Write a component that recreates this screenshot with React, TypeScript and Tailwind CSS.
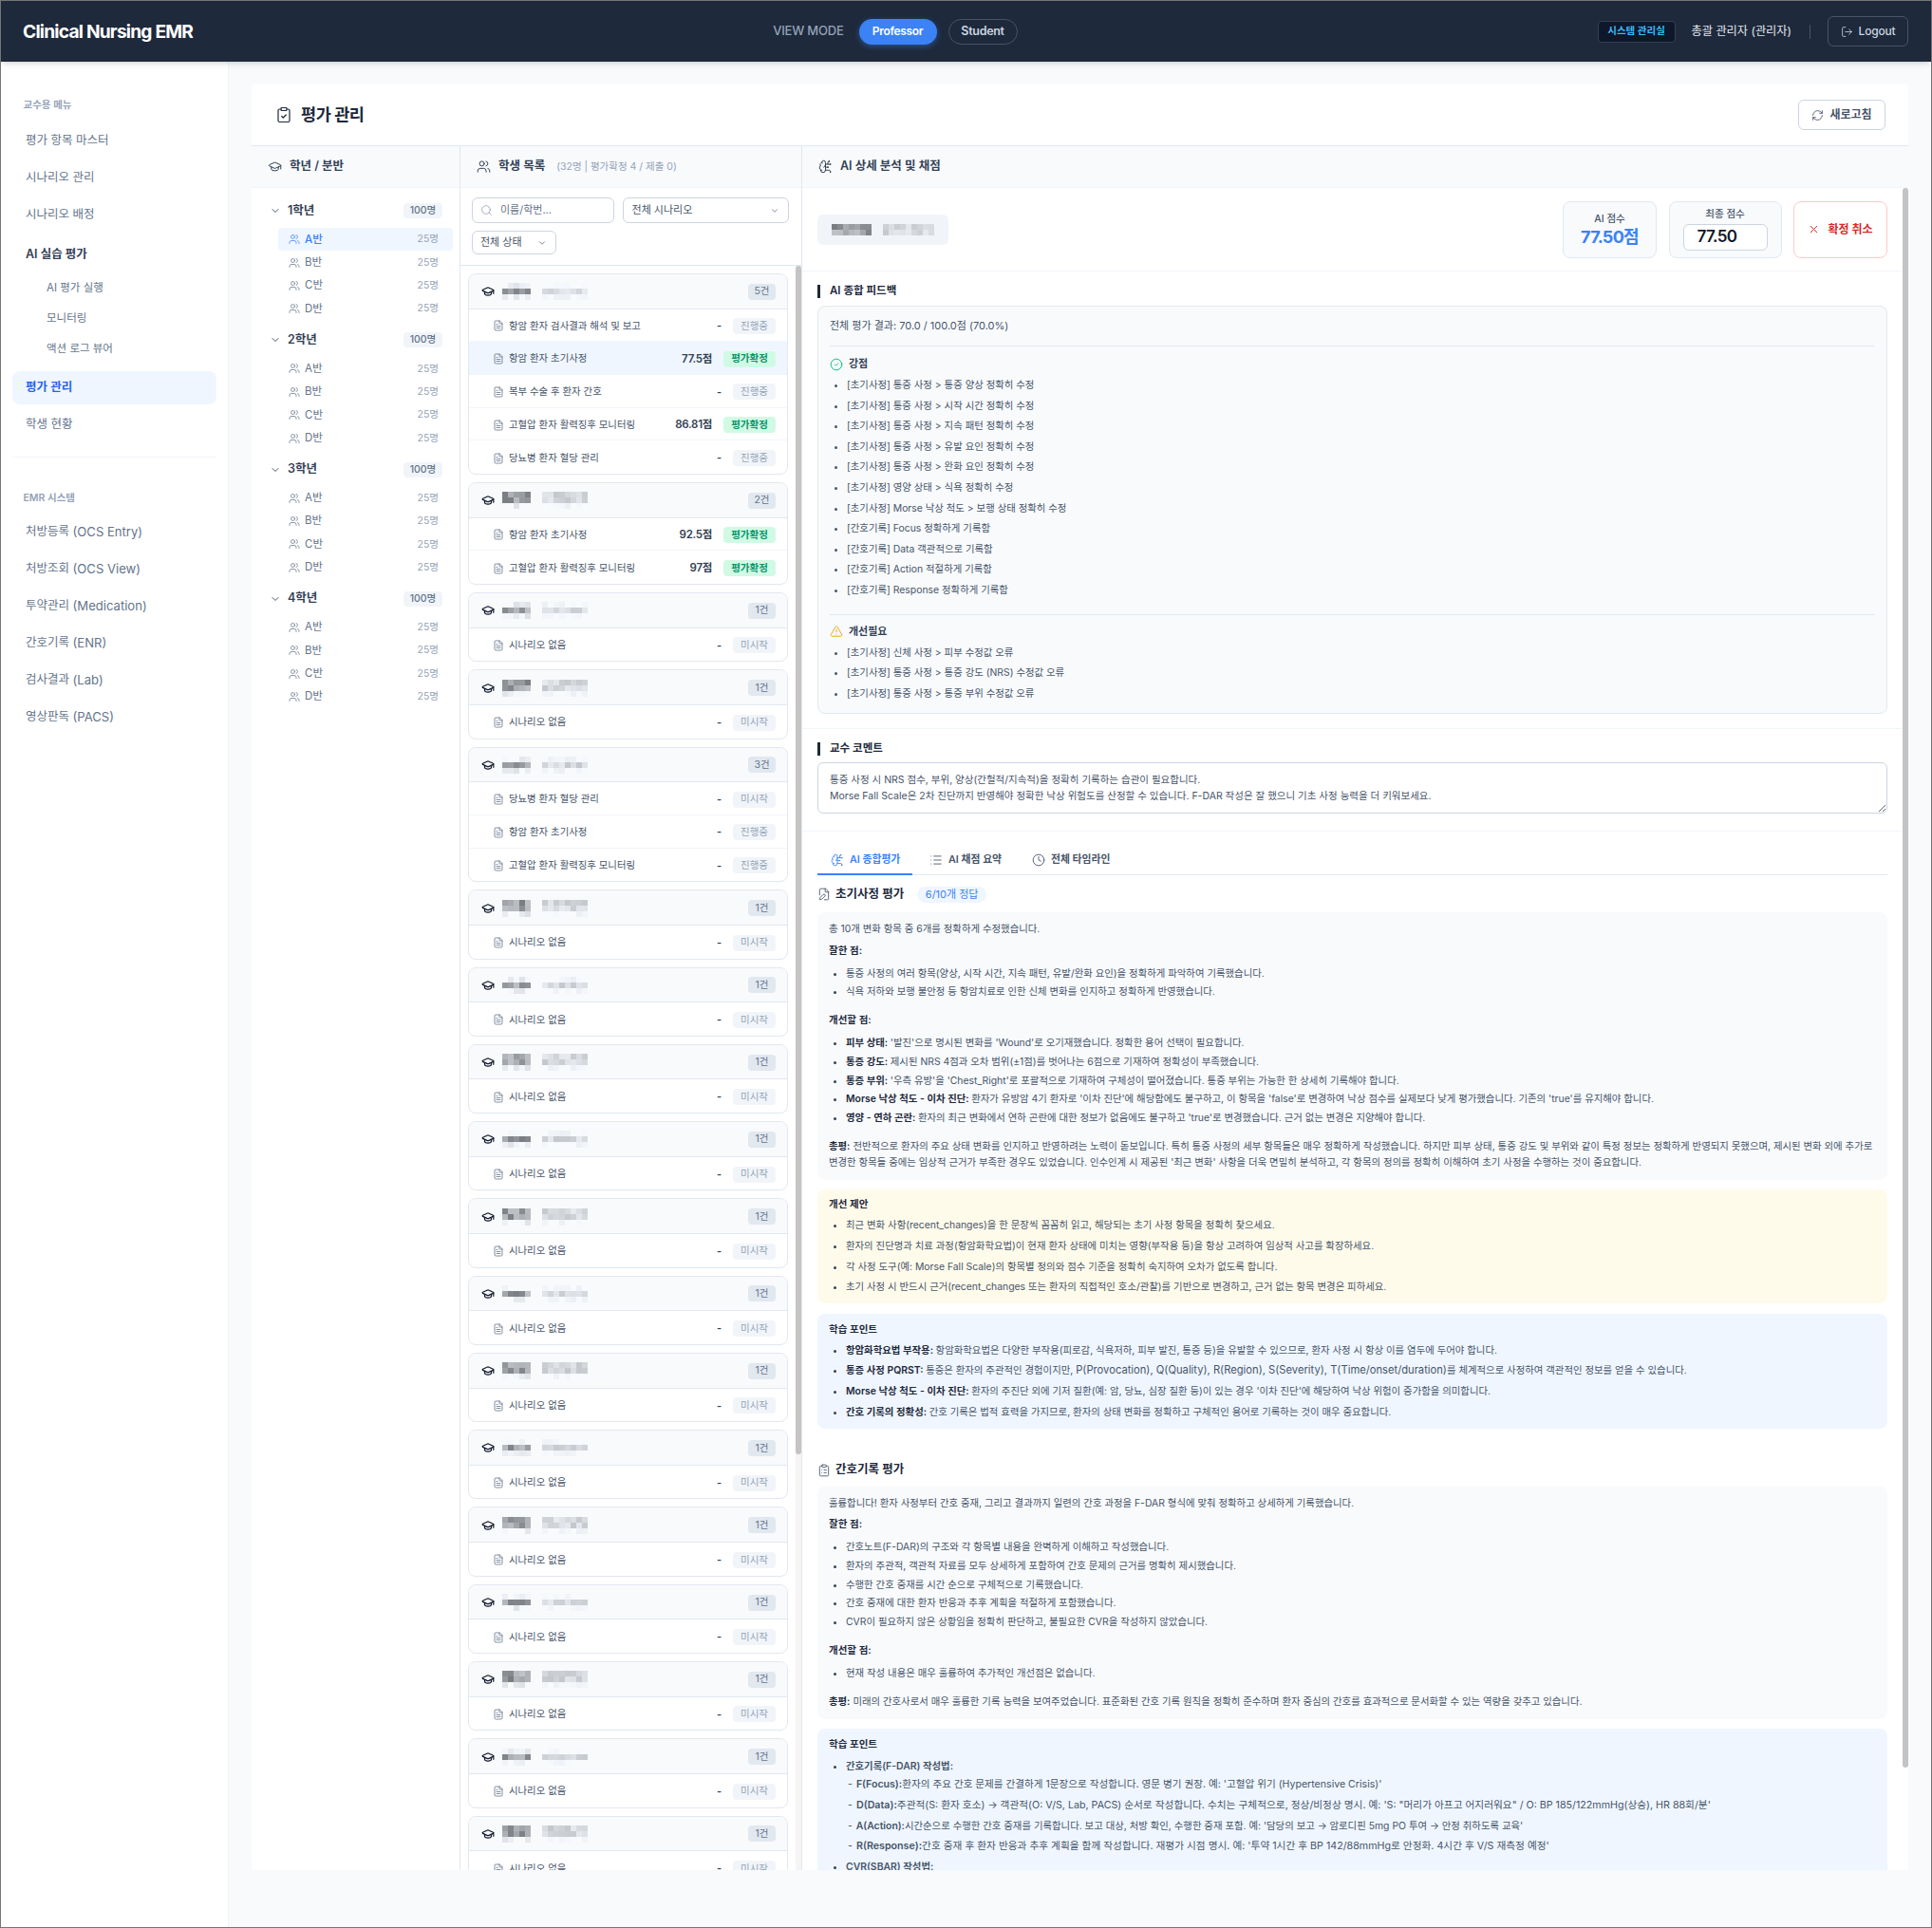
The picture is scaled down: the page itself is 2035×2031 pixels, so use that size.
import React from "react";
import {
  BrainCircuit, ChevronDown, CircleCheck, ClipboardCheck, ClipboardList, Clock, FilePen, FileText,
  GraduationCap, List, LogOut, RefreshCw, Search, TriangleAlert, Users, X,
} from "lucide-react";

function Mosaic({ seed, cols = 15, rows = 3, dark = 5, gap = 2, size = 6 }: { seed: number; cols?: number; rows?: number; dark?: number; gap?: number; size?: number }) {
  let s = seed * 7919 + 13;
  const rnd = () => {
    s = (s * 16807 + 11) % 2147483647;
    return (s % 1000) / 1000;
  };
  const cells: React.ReactNode[] = [];
  const upper = seed % 2 === 0;
  for (let r = 0; r < rows; r++) {
    for (let c = 0; c < cols; c++) {
      if (c >= dark && c < dark + gap) continue;
      const isDark = c < dark;
      const main = rows === 2 || r === 1 || (upper && r === 0);
      let g: number;
      if (isDark) g = main ? 125 + rnd() * 70 : 225 + rnd() * 25;
      else g = main ? 200 + rnd() * 35 : 240 + rnd() * 12;
      if (!main && rnd() < 0.35) continue;
      const v = Math.round(g);
      cells.push(<rect key={r + "-" + c} x={c * size} y={r * size} width={size} height={size} fill={`rgb(${v - 4},${v - 1},${v + 4})`} />);
    }
  }
  return (
    <svg width={cols * size} height={rows * size} className="block shrink-0" shapeRendering="crispEdges">
      {cells}
    </svg>
  );
}

const professorMenu = ["평가 항목 마스터", "시나리오 관리", "시나리오 배정"];
const emrMenu: [string, string][] = [["처방등록", "(OCS Entry)"], ["처방조회", "(OCS View)"], ["투약관리", "(Medication)"], ["간호기록", "(ENR)"], ["검사결과", "(Lab)"], ["영상판독", "(PACS)"]];

function Sidebar() {
  return (
    <aside className="w-[240px] shrink-0 bg-white border-r border-[#f1f5f9] px-3 pt-[38px] flex flex-col">
      <div className="pl-[11.5px] h-[15px] leading-[15px] text-[10.5px] font-semibold text-[#94a3b8] mb-[12.5px]">교수용 메뉴</div>
      <div className="flex flex-col gap-1">
        {professorMenu.map((m) => (
          <div key={m} className="h-[35px] px-[14px] flex items-center text-[12.5px] text-[#64748b]">{m}</div>
        ))}
      </div>
      <div className="mt-[7px] h-[35px] px-[14px] flex items-center text-[12.5px] font-semibold text-[#334155]">AI 실습 평가</div>
      <div className="mt-[4px] flex flex-col gap-1">
        {["AI 평가 실행", "모니터링", "액션 로그 뷰어"].map((m) => (
          <div key={m} className="h-[28px] pl-[36px] flex items-center text-[11.5px] text-[#64748b]">{m}</div>
        ))}
      </div>
      <div className="mt-[9px] h-[35px] px-[14px] flex items-center rounded-lg bg-[#eff6ff] text-[12.5px] font-semibold text-[#2563eb]">평가 관리</div>
      <div className="mt-1 h-[35px] px-[14px] flex items-center text-[12.5px] text-[#64748b]">학생 현황</div>
      <div className="mt-[16px] border-t border-[#f1f5f9]" />
      <div className="mt-[35px] pl-[11.5px] h-[15px] leading-[15px] text-[10.5px] font-semibold text-[#94a3b8] mb-[11.5px]">EMR 시스템</div>
      <div className="flex flex-col gap-1">
        {emrMenu.map(([k, e]) => (
          <div key={k} className="h-[35px] px-[14px] flex items-center text-[12.5px] text-[#64748b] whitespace-pre">{k} <span className="text-[13.1px]">{e}</span></div>
        ))}
      </div>
    </aside>
  );
}

function Header() {
  return (
    <header className="h-[64px] shrink-0 bg-[#1e293b] flex items-center justify-between pl-[23px] pr-[24px] shadow-md relative z-10">
      <div className="text-[19.2px] font-bold tracking-[-0.8px] text-white">Clinical Nursing EMR</div>
      <div className="flex items-center">
        <span className="text-[13px] font-medium text-[#94a3b8] tracking-[-0.2px] mr-[16px]">VIEW MODE</span>
        <button className="w-[82px] h-[27px] rounded-full bg-[#3b82f6] text-white text-[12px] font-semibold tracking-[-0.3px] shadow-[0_2px_6px_rgba(59,130,246,0.45)]">Professor</button>
        <button className="ml-[12px] w-[73px] h-[27px] rounded-full border border-[#475569] text-[#cbd5e1] text-[12.5px] font-semibold tracking-[-0.3px]">Student</button>
      </div>
      <div className="flex items-center">
        <div className="w-[82px] h-[23px] rounded bg-[#0f172a] border border-[#334155] flex items-center justify-center text-[10.5px] font-semibold text-[#38bdf8]">시스템 관리실</div>
        <div className="ml-[17px] text-[12.2px] text-[#e2e8f0]">총괄 관리자 (관리자)</div>
        <div className="ml-[19px] h-[15px] border-l border-[#475569]" />
        <button className="ml-[18px] w-[85px] h-[32px] rounded-md border border-[#475569] flex items-center justify-center gap-[6px] text-[#cbd5e1] text-[12px] font-medium tracking-[-0.2px]">
          <LogOut size={13} strokeWidth={1.5} />
          <span>Logout</span>
        </button>
      </div>
    </header>
  );
}

function ColHeader({ icon, title, sub, pl }: { icon: React.ReactNode; title: string; sub?: string; pl: string }) {
  return (
    <div className={`h-[44px] shrink-0 bg-[#f8fafc] border-b border-[#f1f5f9] flex items-center ${pl}`}>
      {icon}
      <span className="text-[12.5px] font-semibold text-[#334155]">{title}</span>
      {sub && <span className="ml-[12px] text-[10.5px] text-[#94a3b8]">{sub}</span>}
    </div>
  );
}

function GradeTree() {
  return (
    <div className="w-[220px] shrink-0 border-r border-[#e2e8f0] flex flex-col">
      <ColHeader pl="pl-[17px]" title="학년 / 분반" icon={<GraduationCap size={15} strokeWidth={1.6} className="mr-[8px] text-[#334155]" />} />
      <div className="pt-[12px]">
        {[1, 2, 3, 4].map((g) => (
          <div key={g} className="mb-[8.7px]">
            <div className="h-[24px] pl-[19px] pr-[18px] flex items-center">
              <ChevronDown size={12} className="text-[#475569] mr-[7px]" />
              <span className="text-[12.5px] font-semibold text-[#334155]">{g}학년</span>
              <span className="ml-auto w-[41px] h-[16px] rounded bg-[#f1f5f9] flex items-center justify-center text-[10.5px] font-medium text-[#64748b]">100명</span>
            </div>
            <div className="mt-[6px] ml-[28px] mr-[7px]">
              {["A", "B", "C", "D"].map((c) => {
                const active = g === 1 && c === "A";
                return (
                  <div key={c} className={`h-[24.4px] pl-[11px] pr-[15px] flex items-center rounded ${active ? "bg-[#eff6ff]" : ""}`}>
                    <Users size={12} strokeWidth={1.5} className={active ? "text-[#3b82f6]" : "text-[#64748b]"} />
                    <span className={`ml-[5px] text-[11.5px] ${active ? "text-[#3b82f6] font-medium" : "text-[#64748b]"}`}>{c}반</span>
                    <span className="ml-auto text-[10.5px] text-[#94a3b8]">25명</span>
                  </div>
                );
              })}
            </div>
          </div>
        ))}
      </div>
    </div>
  );
}

type Row = { t: string; score?: string; st: "진행중" | "평가확정" | "미시작"; sel?: boolean };
const none: Row[] = [{ t: "시나리오 없음", st: "미시작" }];
const cards: Row[][] = [
  [
    { t: "항암 환자 검사결과 해석 및 보고", st: "진행중" },
    { t: "항암 환자 초기사정", score: "77.5점", st: "평가확정", sel: true },
    { t: "복부 수술 후 환자 간호", st: "진행중" },
    { t: "고혈압 환자 활력징후 모니터링", score: "86.81점", st: "평가확정" },
    { t: "당뇨병 환자 혈당 관리", st: "진행중" },
  ],
  [
    { t: "항암 환자 초기사정", score: "92.5점", st: "평가확정" },
    { t: "고혈압 환자 활력징후 모니터링", score: "97점", st: "평가확정" },
  ],
  none,
  none,
  [
    { t: "당뇨병 환자 혈당 관리", st: "미시작" },
    { t: "항암 환자 초기사정", st: "진행중" },
    { t: "고혈압 환자 활력징후 모니터링", st: "진행중" },
  ],
  ...Array.from({ length: 20 }, () => none),
];

function StudentCard({ rows, index }: { rows: Row[]; index: number }) {
  return (
    <div className="border border-[#e2e8f0] rounded-lg overflow-hidden bg-white shrink-0">
      <div className="h-[36.6px] bg-[#f8fafc] border-b border-[#e2e8f0] flex items-center pl-[13px] pr-[12px] pt-[1px]">
        <GraduationCap size={14} strokeWidth={2} className="text-[#0f172a] shrink-0" />
        <span className="ml-[8px]"><Mosaic seed={index + 3} /></span>
        <span className="ml-auto w-[29px] h-[17px] rounded bg-[#e2e8f0] flex items-center justify-center text-[10.5px] text-[#64748b]">{rows.length}건</span>
      </div>
      {rows.map((r, i) => (
        <div key={i} className={`h-[34.7px] flex items-center pl-[25px] pr-[12px] pt-[2px] ${i < rows.length - 1 ? "border-b border-[#f1f5f9]" : ""} ${r.sel ? "bg-[#eff6ff]" : ""}`}>
          <FileText size={12} strokeWidth={1.6} className="text-[#64748b] shrink-0" />
          <span className="ml-[5px] text-[10.4px] text-[#475569]">{r.t}</span>
          <span className={`ml-auto font-semibold text-[#334155] ${r.score ? "text-[11.5px] tracking-[-0.3px]" : "text-[11px]"}`}>{r.score ?? "-"}</span>
          {r.st === "평가확정" ? (
            <span className="ml-[12px] w-[55px] h-[17px] rounded bg-[#d1fae5] flex items-center justify-center text-[10.5px] font-semibold text-[#059669]">{r.st}</span>
          ) : (
            <span className="ml-[12px] w-[45px] h-[17px] rounded bg-[#f1f5f9] flex items-center justify-center text-[10.5px] text-[#94a3b8]">{r.st}</span>
          )}
        </div>
      ))}
    </div>
  );
}

function StudentList() {
  return (
    <div className="w-[360px] shrink-0 border-r border-[#e2e8f0] flex flex-col min-h-0">
      <ColHeader pl="pl-[17px]" title="학생 목록" sub="(32명 | 평가확정 4 / 제출 0)" icon={<Users size={15} strokeWidth={1.6} className="mr-[8px] text-[#334155]" />} />
      <div className="h-[82px] shrink-0 border-b border-[#e2e8f0] pl-[12px] pr-[13px] pt-[10px] flex flex-col gap-[8px]">
        <div className="flex gap-[9px]">
          <div className="w-[150px] h-[27px] rounded-md border border-[#cbd5e1] flex items-center pl-[8px] text-[11px] text-[#64748b]">
            <Search size={13} strokeWidth={1.5} className="text-[#94a3b8]" />
            <span className="ml-[8px]">이름/학번...</span>
          </div>
          <div className="w-[176px] h-[27px] rounded-md border border-[#cbd5e1] flex items-center justify-between pl-[9px] pr-[9px] text-[11px] text-[#475569]">
            <span>전체 시나리오</span>
            <ChevronDown size={10} className="text-[#64748b]" />
          </div>
        </div>
        <div className="w-[89px] h-[25px] rounded-md border border-[#cbd5e1] flex items-center justify-between pl-[8px] pr-[9px] text-[11px] text-[#475569]">
          <span>전체 상태</span>
          <ChevronDown size={10} className="text-[#64748b]" />
        </div>
      </div>
      <div className="flex-1 min-h-0 flex">
        <div className="flex-1 min-w-0 overflow-y-auto px-[8px] pt-[8px] pb-[8px] flex flex-col gap-[8px]">
          {cards.map((rows, i) => (
            <StudentCard key={i} rows={rows} index={i} />
          ))}
        </div>
        <div className="w-[6px] shrink-0 bg-[#f5f5f5]">
          <div className="h-[1252px] rounded-full bg-[#c4c4c4]" />
        </div>
      </div>
    </div>
  );
}

function SectionTitle({ children }: { children: React.ReactNode }) {
  return (
    <div className="h-[14px] border-l-[3px] border-[#1e293b] pl-[10px] flex items-center text-[11.5px] font-semibold text-[#1e293b]">{children}</div>
  );
}

const strengths = [
  "[초기사정] 통증 사정 > 통증 양상 정확히 수정",
  "[초기사정] 통증 사정 > 시작 시간 정확히 수정",
  "[초기사정] 통증 사정 > 지속 패턴 정확히 수정",
  "[초기사정] 통증 사정 > 유발 요인 정확히 수정",
  "[초기사정] 통증 사정 > 완화 요인 정확히 수정",
  "[초기사정] 영양 상태 > 식욕 정확히 수정",
  "[초기사정] Morse 낙상 척도 > 보행 상태 정확히 수정",
  "[간호기록] Focus 정확하게 기록함",
  "[간호기록] Data 객관적으로 기록함",
  "[간호기록] Action 적절하게 기록함",
  "[간호기록] Response 정확하게 기록함",
];
const weaknesses = [
  "[초기사정] 신체 사정 > 피부 수정값 오류",
  "[초기사정] 통증 사정 > 통증 강도 (NRS) 수정값 오류",
  "[초기사정] 통증 사정 > 통증 부위 수정값 오류",
];

function FbList({ items }: { items: string[] }) {
  return (
    <ul className="mt-[3px] pl-[18px] list-disc marker:text-[#475569] text-[10.4px] leading-[21.6px] text-[#475569]">
      {items.map((t) => (
        <li key={t}>{t}</li>
      ))}
    </ul>
  );
}

type Li = { b?: string; t: React.ReactNode };

function Bul({ items, step }: { items: Li[]; step: string }) {
  return (
    <ul className={`pl-[18px] list-disc marker:text-[#334155] ${step}`}>
      {items.map((it, i) => (
        <li key={i}>
          {it.b && <b className="font-semibold text-[#1e293b]">{it.b} </b>}
          {it.t}
        </li>
      ))}
    </ul>
  );
}

function H5({ children, cls }: { children: React.ReactNode; cls?: string }) {
  return <div className={`text-[10.5px] leading-[17px] font-semibold text-[#1e293b] ${cls ?? ""}`}>{children}</div>;
}

function GrayBox({ intro, good, bad, summary }: { intro: string; good: Li[]; bad: Li[]; summary: string }) {
  return (
    <div className="rounded-lg bg-[#f8fafc] pl-[12px] pr-[14px] pt-[9.5px] pb-[10px] text-[10.4px] leading-[17px] text-[#475569]">
      <p>{intro}</p>
      <H5 cls="mt-[5.3px]">잘한 점:</H5>
      <div className="mt-[5.9px]"><Bul items={good} step="leading-[19.6px]" /></div>
      <H5 cls="mt-[11.2px]">개선할 점:</H5>
      <div className="mt-[6.5px]"><Bul items={bad} step="leading-[19.6px]" /></div>
      <p className="mt-[11.6px]"><b className="font-semibold text-[#1e293b]">총평:</b> {summary}</p>
    </div>
  );
}

function TintBox({ title, items, tone, mt }: { title: string; items: Li[]; tone: string; mt: string }) {
  return (
    <div className={`${mt} rounded-lg ${tone} pl-[12px] pr-[14px] pt-[7.5px] pb-[6.5px] text-[10.4px] text-[#475569]`}>
      <H5>{title}</H5>
      <div className="mt-[3px]"><Bul items={items} step="leading-[21.6px]" /></div>
    </div>
  );
}

function Detail() {
  return (
    <div className="flex-1 min-w-0 flex flex-col min-h-0">
      <ColHeader pl="pl-[17px]" title="AI 상세 분석 및 채점" icon={<BrainCircuit size={15} strokeWidth={1.6} className="mr-[8px] text-[#334155]" />} />
      <div className="flex-1 min-h-0 flex">
        <div className="flex-1 min-w-0 overflow-y-auto">
          <div className="h-[88px] border-b border-[#f1f5f9] px-[16px] flex items-center justify-between">
            <div className="w-[138px] h-[32px] rounded-md bg-[#f1f5f9] flex items-center justify-center">
              <Mosaic seed={97} cols={18} rows={2} dark={7} gap={2} />
            </div>
            <div className="flex gap-[12.5px]">
              <div className="w-[99px] h-[60px] rounded-lg bg-[#f8fafc] border border-[#e2e8f0] flex flex-col items-center justify-center">
                <span className="text-[10.5px] font-medium text-[#475569] leading-[13px] mt-[2px]">AI 점수</span>
                <span className="mt-[2px] text-[18px] font-bold tracking-[-0.7px] text-[#3b82f6] leading-[22px]">77.50점</span>
              </div>
              <div className="w-[119px] h-[60px] rounded-lg bg-[#f8fafc] border border-[#e2e8f0] flex flex-col items-center pt-[6px]">
                <span className="text-[10.5px] font-medium text-[#475569] leading-[13px]">최종 점수</span>
                <div className="mt-[4px] w-[89px] h-[28px] rounded-md bg-white border border-[#cbd5e1] flex items-center pl-[14px] text-[17px] font-semibold tracking-[-0.6px] text-[#0f172a]">77.50</div>
              </div>
              <button className="w-[99px] h-[60px] rounded-lg bg-white border border-[#fecaca] flex items-center justify-center gap-[8px] text-[12px] font-semibold text-[#dc2626]">
                <X size={13} strokeWidth={1.8} />
                <span>확정 취소</span>
              </button>
            </div>
          </div>

          <section className="px-[16px] pt-[14px] pb-[15px] border-b border-[#f1f5f9]">
            <SectionTitle>AI 종합 피드백</SectionTitle>
            <div className="mt-[8px] rounded-lg border border-[#e2e8f0] bg-[#f8fafc] px-[12px] pt-[12px] pb-[9.5px]">
              <div className="text-[11px] leading-[17px] text-[#475569] pb-[12px] border-b border-[#e2e8f0]">전체 평가 결과: 70.0 / 100.0점 (70.0%)</div>
              <div className="pt-[10px] pb-[14px] border-b border-[#e2e8f0]">
                <div className="h-[17px] flex items-center gap-[6px] text-[11px] font-semibold text-[#334155]">
                  <CircleCheck size={14} strokeWidth={1.6} className="text-[#10b981]" />
                  <span>강점</span>
                </div>
                <FbList items={strengths} />
              </div>
              <div className="pt-[9px]">
                <div className="h-[17px] flex items-center gap-[6px] text-[11px] font-semibold text-[#334155]">
                  <TriangleAlert size={14} strokeWidth={1.6} className="text-[#f59e0b]" />
                  <span>개선필요</span>
                </div>
                <FbList items={weaknesses} />
              </div>
            </div>
          </section>

          <section className="px-[16px] pt-[14px] pb-[18px] border-b border-[#f1f5f9]">
            <SectionTitle>교수 코멘트</SectionTitle>
            <textarea
              className="mt-[7px] block w-full h-[54px] rounded-md border border-[#cbd5e1] bg-white px-[12px] py-[9px] text-[10.5px] leading-[17px] text-[#475569]"
              defaultValue={"통증 사정 시 NRS 점수, 부위, 양상(간헐적/지속적)을 정확히 기록하는 습관이 필요합니다.\nMorse Fall Scale은 2차 진단까지 반영해야 정확한 낙상 위험도를 산정할 수 있습니다. F-DAR 작성은 잘 했으니 기초 사정 능력을 더 키워보세요."}
            />
          </section>

          <section className="px-[16px] pt-[16px] pb-[12px]">
            <div className="flex gap-[4px] border-b border-[#e2e8f0] h-[30px]">
              <div className="w-[100px] h-[30px] border-b-2 border-[#3b82f6] pl-[14px] flex items-center gap-[6px] text-[10.8px] font-semibold text-[#3b82f6]">
                <BrainCircuit size={14} strokeWidth={1.5} /><span>AI 종합평가</span>
              </div>
              <div className="px-[14px] flex items-center gap-[6px] text-[10.8px] font-semibold text-[#475569]">
                <List size={14} strokeWidth={1.5} /><span>AI 채점 요약</span>
              </div>
              <div className="px-[14px] flex items-center gap-[6px] text-[10.8px] font-semibold text-[#475569]">
                <Clock size={14} strokeWidth={1.5} /><span>전체 타임라인</span>
              </div>
            </div>

            <div className="mt-[12px] mb-[10px] h-[17px] flex items-center">
              <FilePen size={14} strokeWidth={1.5} className="text-[#475569]" />
              <span className="ml-[5px] text-[12.5px] font-semibold text-[#1e293b]">초기사정 평가</span>
              <span className="ml-[14px] w-[73px] h-[17px] rounded-full bg-[#eff6ff] flex items-center justify-center text-[11px] text-[#3b82f6]">6/10개 정답</span>
            </div>
            <GrayBox
              intro="총 10개 변화 항목 중 6개를 정확하게 수정했습니다."
              good={[
                { t: "통증 사정의 여러 항목(양상, 시작 시간, 지속 패턴, 유발/완화 요인)을 정확하게 파악하여 기록했습니다." },
                { t: "식욕 저하와 보행 불안정 등 항암치료로 인한 신체 변화를 인지하고 정확하게 반영했습니다." },
              ]}
              bad={[
                { b: "피부 상태:", t: "'발진'으로 명시된 변화를 'Wound'로 오기재했습니다. 정확한 용어 선택이 필요합니다." },
                { b: "통증 강도:", t: "제시된 NRS 4점과 오차 범위(±1점)를 벗어나는 6점으로 기재하여 정확성이 부족했습니다." },
                { b: "통증 부위:", t: "'우측 유방'을 'Chest_Right'로 포괄적으로 기재하여 구체성이 떨어졌습니다. 통증 부위는 가능한 한 상세히 기록해야 합니다." },
                { b: "Morse 낙상 척도 - 이차 진단:", t: "환자가 유방암 4기 환자로 '이차 진단'에 해당함에도 불구하고, 이 항목을 'false'로 변경하여 낙상 점수를 실제보다 낮게 평가했습니다. 기존의 'true'를 유지해야 합니다." },
                { b: "영양 - 연하 곤란:", t: "환자의 최근 변화에서 연하 곤란에 대한 정보가 없음에도 불구하고 'true'로 변경했습니다. 근거 없는 변경은 지양해야 합니다." },
              ]}
              summary="전반적으로 환자의 주요 상태 변화를 인지하고 반영하려는 노력이 돋보입니다. 특히 통증 사정의 세부 항목들은 매우 정확하게 작성했습니다. 하지만 피부 상태, 통증 강도 및 부위와 같이 특정 정보는 정확하게 반영되지 못했으며, 제시된 변화 외에 추가로 변경한 항목들 중에는 임상적 근거가 부족한 경우도 있었습니다. 인수인계 시 제공된 '최근 변화' 사항을 더욱 면밀히 분석하고, 각 항목의 정의를 정확히 이해하여 초기 사정을 수행하는 것이 중요합니다."
            />
            <TintBox
              title="개선 제안"
              tone="bg-[#fffbeb]"
              mt="mt-[10px]"
              items={[
                { t: "최근 변화 사항(recent_changes)을 한 문장씩 꼼꼼히 읽고, 해당되는 초기 사정 항목을 정확히 찾으세요." },
                { t: "환자의 진단명과 치료 과정(항암화학요법)이 현재 환자 상태에 미치는 영향(부작용 등)을 항상 고려하여 임상적 사고를 확장하세요." },
                { t: "각 사정 도구(예: Morse Fall Scale)의 항목별 정의와 점수 기준을 정확히 숙지하여 오차가 없도록 합니다." },
                { t: "초기 사정 시 반드시 근거(recent_changes 또는 환자의 직접적인 호소/관찰)를 기반으로 변경하고, 근거 없는 항목 변경은 피하세요." },
              ]}
            />
            <TintBox
              title="학습 포인트"
              tone="bg-[#eff6ff]"
              mt="mt-[11px]"
              items={[
                { b: "항암화학요법 부작용:", t: "항암화학요법은 다양한 부작용(피로감, 식욕저하, 피부 발진, 통증 등)을 유발할 수 있으므로, 환자 사정 시 항상 이를 염두에 두어야 합니다." },
                { b: "통증 사정 PQRST:", t: <>통증은 환자의 주관적인 경험이지만, <span className="text-[11.2px]">P(Provocation), Q(Quality), R(Region), S(Severity), T(Time/onset/duration)</span>를 체계적으로 사정하여 객관적인 정보를 얻을 수 있습니다.</> },
                { b: "Morse 낙상 척도 - 이차 진단:", t: "환자의 주진단 외에 기저 질환(예: 암, 당뇨, 심장 질환 등)이 있는 경우 '이차 진단'에 해당하여 낙상 위험이 증가함을 의미합니다." },
                { b: "간호 기록의 정확성:", t: "간호 기록은 법적 효력을 가지므로, 환자의 상태 변화를 정확하고 구체적인 용어로 기록하는 것이 매우 중요합니다." },
              ]}
            />

            <div className="mt-[35.5px] mb-[8.5px] h-[17px] flex items-center">
              <ClipboardList size={14} strokeWidth={1.5} className="text-[#475569]" />
              <span className="ml-[5px] text-[12.5px] font-semibold text-[#1e293b]">간호기록 평가</span>
            </div>
            <GrayBox
              intro="훌륭합니다! 환자 사정부터 간호 중재, 그리고 결과까지 일련의 간호 과정을 F-DAR 형식에 맞춰 정확하고 상세하게 기록했습니다."
              good={[
                { t: "간호노트(F-DAR)의 구조와 각 항목별 내용을 완벽하게 이해하고 작성했습니다." },
                { t: "환자의 주관적, 객관적 자료를 모두 상세하게 포함하여 간호 문제의 근거를 명확히 제시했습니다." },
                { t: "수행한 간호 중재를 시간 순으로 구체적으로 기록했습니다." },
                { t: "간호 중재에 대한 환자 반응과 추후 계획을 적절하게 포함했습니다." },
                { t: "CVR이 필요하지 않은 상황임을 정확히 판단하고, 불필요한 CVR을 작성하지 않았습니다." },
              ]}
              bad={[{ t: "현재 작성 내용은 매우 훌륭하여 추가적인 개선점은 없습니다." }]}
              summary="미래의 간호사로서 매우 훌륭한 기록 능력을 보여주었습니다. 표준화된 간호 기록 원칙을 정확히 준수하며 환자 중심의 간호를 효과적으로 문서화할 수 있는 역량을 갖추고 있습니다."
            />
            <div className="mt-[10px] rounded-lg bg-[#eff6ff] pl-[12px] pr-[14px] pt-[7.5px] pb-[8px] text-[10.4px] text-[#475569]">
              <H5>학습 포인트</H5>
              <ul className="mt-[4px] pl-[18px] list-disc marker:text-[#334155] leading-[21.6px]">
                <li>
                  <b className="font-semibold">간호기록(F-DAR) 작성법:</b>
                  <div className="pl-[2px] -mt-[2px]">
                    <div className="flex gap-[4px] text-[10.6px]"><span>-</span><span><b className="font-semibold">F(Focus):</b>환자의 주요 간호 문제를 간결하게 1문장으로 작성합니다. 영문 병기 권장. 예: '고혈압 위기 (Hypertensive Crisis)'</span></div>
                    <div className="flex gap-[4px] text-[10.7px]"><span>-</span><span><b className="font-semibold">D(Data):</b>주관적(S: 환자 호소) → 객관적(O: V/S, Lab, PACS) 순서로 작성합니다. 수치는 구체적으로, 정상/비정상 명시. 예: 'S: "머리가 아프고 어지러워요" / O: BP 185/122mmHg(상승), HR 88회/분'</span></div>
                    <div className="flex gap-[4px]"><span>-</span><span><b className="font-semibold">A(Action):</b>시간순으로 수행한 간호 중재를 기록합니다. 보고 대상, 처방 확인, 수행한 중재 포함. 예: '담당의 보고 → 암로디핀 5mg PO 투여 → 안정 취하도록 교육'</span></div>
                    <div className="flex gap-[4px] text-[10.7px]"><span>-</span><span><b className="font-semibold">R(Response):</b>간호 중재 후 환자 반응과 추후 계획을 함께 작성합니다. 재평가 시점 명시. 예: '투약 1시간 후 BP 142/88mmHg로 안정화. 4시간 후 V/S 재측정 예정'</span></div>
                  </div>
                </li>
                <li>
                  <b className="font-semibold">CVR(SBAR) 작성법:</b>
                  <div className="pl-[2px] -mt-[2px]">
                    <div className="flex gap-[4px]"><span>-</span><span><b className="font-semibold">S(Situation):</b>현재 상황을 간결하게 보고합니다.</span></div>
                    <div className="flex gap-[4px]"><span>-</span><span><b className="font-semibold">B(Background):</b>환자의 배경 정보를 전달합니다.</span></div>
                  </div>
                </li>
              </ul>
            </div>
          </section>
        </div>
        <div className="w-[6px] shrink-0">
          <div className="h-[1664px] rounded-full bg-[#c4c4c4]" />
        </div>
      </div>
    </div>
  );
}

export default function App() {
  return (
    <div className="w-[2035px] h-[2031px] border border-[#757575] bg-[#f8fafc] flex flex-col overflow-hidden font-[Inter,'Noto_Sans_CJK_KR',sans-serif]">
      <Header />
      <div className="flex-1 min-h-0 flex">
        <Sidebar />
        <main className="flex-1 min-w-0 pl-[24px] pr-[24px] pt-[24px]">
          <div className="h-[1881px] bg-white flex flex-col">
            <div className="h-[65px] shrink-0 border-b border-[#e2e8f0] flex items-center pl-[25px] pr-[24px]">
              <ClipboardCheck size={18} strokeWidth={1.6} className="text-[#1e293b]" />
              <h1 className="ml-[9px] text-[17.5px] font-bold tracking-[-0.4px] text-[#1e293b]">평가 관리</h1>
              <button className="ml-auto w-[92px] h-[32px] rounded-md border border-[#cbd5e1] bg-white flex items-center justify-center gap-[6px] text-[12px] font-semibold text-[#475569]">
                <RefreshCw size={13} strokeWidth={1.6} />
                <span>새로고침</span>
              </button>
            </div>
            <div className="flex-1 min-h-0 flex">
              <GradeTree />
              <StudentList />
              <Detail />
            </div>
          </div>
        </main>
      </div>
    </div>
  );
}
